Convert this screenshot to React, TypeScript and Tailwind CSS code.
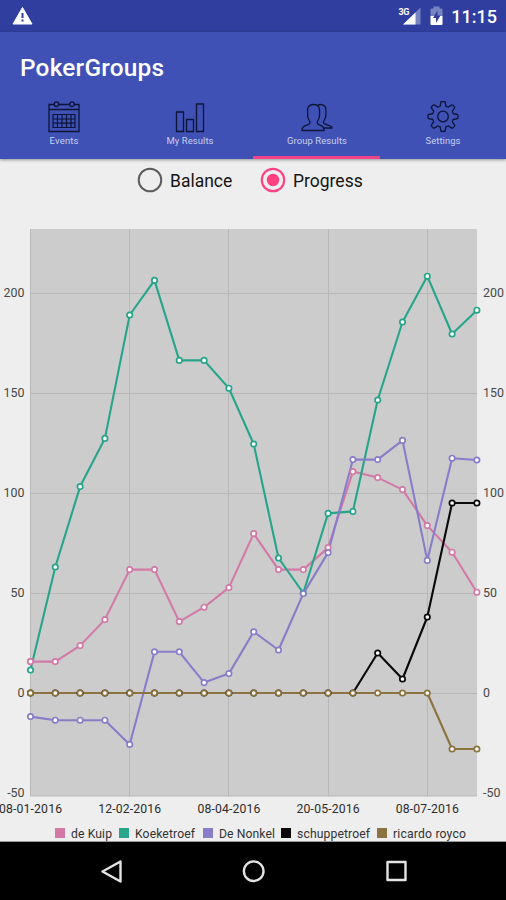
import type { ReactNode } from "react";

type Series = { name: string; color: string; values: number[]; legend: string; swatch: string; width: number };

const series: Series[] = [
  {
    name: "de Kuip",
    color: "#d279a8",
    swatch: "bg-[#d279a8]",
    legend: "w-[64px]",
    width: 41,
    values: [15.7, 15.7, 23.7, 36.7, 61.7, 61.7, 35.7, 42.9, 52.7, 79.7, 61.7, 61.7, 72.7, 110.7, 107.7, 101.7, 83.7, 70.4, 50.4],
  },
  {
    name: "Koeketroef",
    color: "#26a58b",
    swatch: "bg-[#26a58b]",
    legend: "w-[83.5px]",
    width: 60,
    values: [11.5, 63, 103.2, 127.3, 189, 206.3, 166.3, 166.3, 152.4, 124.5, 67.5, 50, 89.8, 90.8, 146.5, 185.5, 208.4, 179.5, 191.4],
  },
  {
    name: "De Nonkel",
    color: "#877dc8",
    swatch: "bg-[#877dc8]",
    legend: "w-[78px]",
    width: 56,
    values: [-11.8, -13.6, -13.6, -13.6, -25.7, 20.6, 20.6, 5.2, 9.7, 30.6, 21.5, 49.7, 70.2, 116.7, 116.7, 126.3, 66.3, 117.4, 116.5],
  },
  {
    name: "schuppetroef",
    color: "#0a0808",
    swatch: "bg-[#0a0808]",
    legend: "w-[96px]",
    width: 73,
    values: [0, 0, 0, 0, 0, 0, 0, 0, 0, 0, 0, 0, 0, 0, 20, 7, 38, 95, 95],
  },
  {
    name: "ricardo royco",
    color: "#8c7340",
    swatch: "bg-[#8c7340]",
    legend: "w-[89px]",
    width: 73,
    values: [0, 0, 0, 0, 0, 0, 0, 0, 0, 0, 0, 0, 0, 0, 0, 0, 0, -28, -28],
  },
];

const px = (i: number) => 30.5 + i * 24.8;
const py = (v: number) => 493 - v * 2;

const dates = ["08-01-2016", "12-02-2016", "08-04-2016", "20-05-2016", "08-07-2016"];

function Chart() {
  return (
    <svg width="506" height="620" viewBox="0 0 506 620" className="block" fontFamily="Roboto, sans-serif" fontSize="12.4" fill="#484848">
      <rect x="30" y="29" width="447" height="567" fill="#cccccc" />
      <g stroke="#b8b8b8" strokeWidth="1">
        {[0, 50, 100, 150, 200].map((v) => (
          <line key={v} x1="30" x2="477" y1={py(v) + 0.5} y2={py(v) + 0.5} />
        ))}
        {[0, 4, 8, 12, 16].map((i) => (
          <line key={i} x1={Math.floor(px(i)) + 0.5} x2={Math.floor(px(i)) + 0.5} y1="29" y2="596" />
        ))}
        <line x1="30" x2="477" y1="596" y2="596" />
      </g>
      {[-50, 0, 50, 100, 150, 200].map((v) => {
        const y = v === -50 ? 596.5 : py(v) + 4;
        return (
          <g key={v}>
            <text x="24.5" y={y} textAnchor="end">{v}</text>
            <text x="483" y={y}>{v}</text>
          </g>
        );
      })}
      {dates.map((d, i) => (
        <text key={d} x={px(i * 4)} y="612.5" textAnchor="middle" fill="#2c2c2c" fontSize="12.2" textLength="63">
          {d}
        </text>
      ))}
      {series.map((s) => (
        <polyline
          key={s.name}
          points={s.values.map((v, i) => `${px(i)},${py(v)}`).join(" ")}
          fill="none"
          stroke={s.color}
          strokeWidth="2.1"
          strokeLinejoin="round"
        />
      ))}
      {series.map((s) => (
        <g key={s.name} stroke={s.color} fill="#ffffff" strokeWidth="1.7">
          {s.values.map((v, i) => (
            <circle key={i} cx={px(i)} cy={py(v)} r="2.7" />
          ))}
        </g>
      ))}
      <circle cx={px(0)} cy={py(15.7)} r="2.7" fill="#ffffff" stroke="#d279a8" strokeWidth="1.7" />
    </svg>
  );
}

function Tab({ label, width, active, children }: { label: string; width: number; active?: boolean; children: ReactNode }) {
  return (
    <div className={`flex h-[58px] flex-1 flex-col items-center ${active ? "border-b-[3px] border-[#f0438a]" : ""}`}>
      <svg width="32" height="34" viewBox="0 0 32 34" fill="none" stroke="#0d1438" strokeWidth="1.3" className="ml-px block shrink-0">
        {children}
      </svg>
      <svg width="90" height="13" className="ml-px block shrink-0" fontFamily="Roboto, sans-serif" fontSize="9.5" fill="#c9cff0">
        <text x="45" y="9" textAnchor="middle" textLength={width}>{label}</text>
      </svg>
    </div>
  );
}

const gear = (() => {
  const pts: string[] = [];
  for (let i = 0; i <= 96; i++) {
    const a = (i / 96) * Math.PI * 2;
    const wave = Math.max(-1, Math.min(1, Math.cos(a * 8) * 1.9));
    const r = 12.8 + wave * 2.2;
    pts.push(`${(16 + r * Math.sin(a)).toFixed(2)},${(15.5 - r * Math.cos(a)).toFixed(2)}`);
  }
  return pts.join(" ");
})();

export default function App() {
  return (
    <div className="flex h-[900px] w-[506px] flex-col overflow-hidden bg-[#eeeeee] font-[Roboto,sans-serif]">
      <div className="flex h-8 shrink-0 items-center bg-[#303f9f] pr-[9px] pl-3">
        <svg width="21" height="32" viewBox="0 0 21 32">
          <path d="M10.5 7.5 20 24H1Z" fill="#fff" stroke="#fff" strokeWidth="1" strokeLinejoin="round" />
          <path d="M10.5 13v5M10.5 19.5v2" stroke="#303f9f" strokeWidth="2" />
        </svg>
        <svg width="46" height="32" viewBox="400 0 46 32" className="ml-auto">
          <path d="M422.500 7.500V24.500H405Z" fill="#7782c1" />
          <rect x="400" y="6" width="12" height="10" fill="#303f9f" />
          <path d="M417.500 12.500V24.500H405Z" fill="#fff" />
          <text x="400.500" y="15" fontFamily="Roboto, sans-serif" fontWeight="700" fontSize="9" textLength="11" fill="#fff">3G</text>
          <path d="M432.500 9.500q0-1 1-1h2V6.500h6v2h2q1 0 1 1V16h-12Z" fill="#7782c1" />
          <path d="M432.500 16h12v8q0 1-1 1h-10q-1 0-1-1Z" fill="#fff" />
          <path d="m439.500 10.500-4.500 7.500h3v5l4.500-7.500h-3Z" fill="#303f9f" />
        </svg>
        <span className="ml-[7px] text-[18px] leading-[33px] font-medium text-white">11:15</span>
      </div>
      <header className="flex h-[127px] shrink-0 flex-col bg-[#3f51b5] shadow-[0_1px_3px_rgba(0,0,0,0.4)]">
        <h1 className="h-[69px] pl-5 text-[24.4px] leading-[71px] font-medium tracking-[0.2px] text-white">PokerGroups</h1>
        <div className="flex">
          <Tab label="Events" width={29}>
            <path d="M6 3.500H1V30.500h30V3.500H26.300M21.700 3.500H10.800M1 8.500h30" />
            <circle cx="8.500" cy="3.200" r="2.300" />
            <circle cx="24" cy="3.200" r="2.300" />
            <path d="M5 13.500h22v13H5ZM5 18h22M5 22.200h22M9.500 13.500v13M14 13.500v13M18.500 13.500v13M23 13.500v13" strokeWidth="1.200" />
          </Tab>
          <Tab label="My Results" width={47}>
            <path d="M2.500 11h7v19.500h-7ZM12.500 18.500h7v12h-7ZM22.500 3h7v27.500h-7Z" />
          </Tab>
          <Tab label="Group Results" width={60} active>
            <path d="M1 29.500c0-3 1-4 3.500-4.800 2.500-.8 4.500-1.200 4.500-3.200 0-1.500-2-3-2.300-6.500C6.300 8 6 3.500 12.500 3.500S18.800 8 18.500 15c-.2 3.500-2.300 5-2.300 6.500 0 2 2 2.400 4 3.200 2.300.8 2.800 1.800 2.800 4.800Z" />
            <path d="M16.500 4.500c2-1.500 8.500-2 8.500 5 0 6 0 7-2 10-1.200 2.500-.3 3.300 2.500 4.200 3.500 1 5.500 1.200 5.500 3.300h-8.500" />
          </Tab>
          <Tab label="Settings" width={35}>
            <polygon points={gear} strokeLinejoin="round" />
            <circle cx="16" cy="15.500" r="5.300" />
          </Tab>
        </div>
      </header>
      <div className="flex h-[41px] shrink-0 items-center pl-[137px] text-[17.5px] text-[#151515]">
        <svg width="26" height="26" viewBox="0 0 26 26" fill="none" className="mt-px">
          <circle cx="13" cy="13" r="11.300" stroke="#5c5c5c" strokeWidth="2" />
        </svg>
        <span className="mt-[3px] ml-[7px] w-[90px]">Balance</span>
        <svg width="26" height="26" viewBox="0 0 26 26" fill="none" className="mt-px">
          <circle cx="13" cy="13" r="11.200" stroke="#ff4081" strokeWidth="2.200" />
          <circle cx="13" cy="13" r="6.200" fill="#ff4081" />
        </svg>
        <span className="mt-[3px] ml-[7px]">Progress</span>
      </div>
      <div className="h-[620px] shrink-0">
        <Chart />
      </div>
      <div className="flex h-[22px] shrink-0 border-b border-[#9a9a9a] pt-[8px] pl-[55px]">
        {series.map((s) => (
          <div key={s.name} className={`flex shrink-0 ${s.legend}`}>
            <span className={`h-[10px] w-[10px] shrink-0 ${s.swatch}`} />
            <svg width="78" height="13" className="ml-[6px] block shrink-0" fontFamily="Roboto, sans-serif" fontSize="12.2" fill="#333333">
              <text x="0" y="9.800" textLength={s.width}>{s.name}</text>
            </svg>
          </div>
        ))}
      </div>
      <nav className="h-[58px] shrink-0 bg-black">
        <svg width="506" height="58" viewBox="0 0 506 58" fill="none" stroke="#e4e4e4" strokeWidth="2.400" strokeLinejoin="round">
          <path d="M120.500 19.500v20L102.500 29.500Z" />
          <circle cx="253.700" cy="29.200" r="9.800" />
          <rect x="387.500" y="20" width="18" height="18" />
        </svg>
      </nav>
    </div>
  );
}
